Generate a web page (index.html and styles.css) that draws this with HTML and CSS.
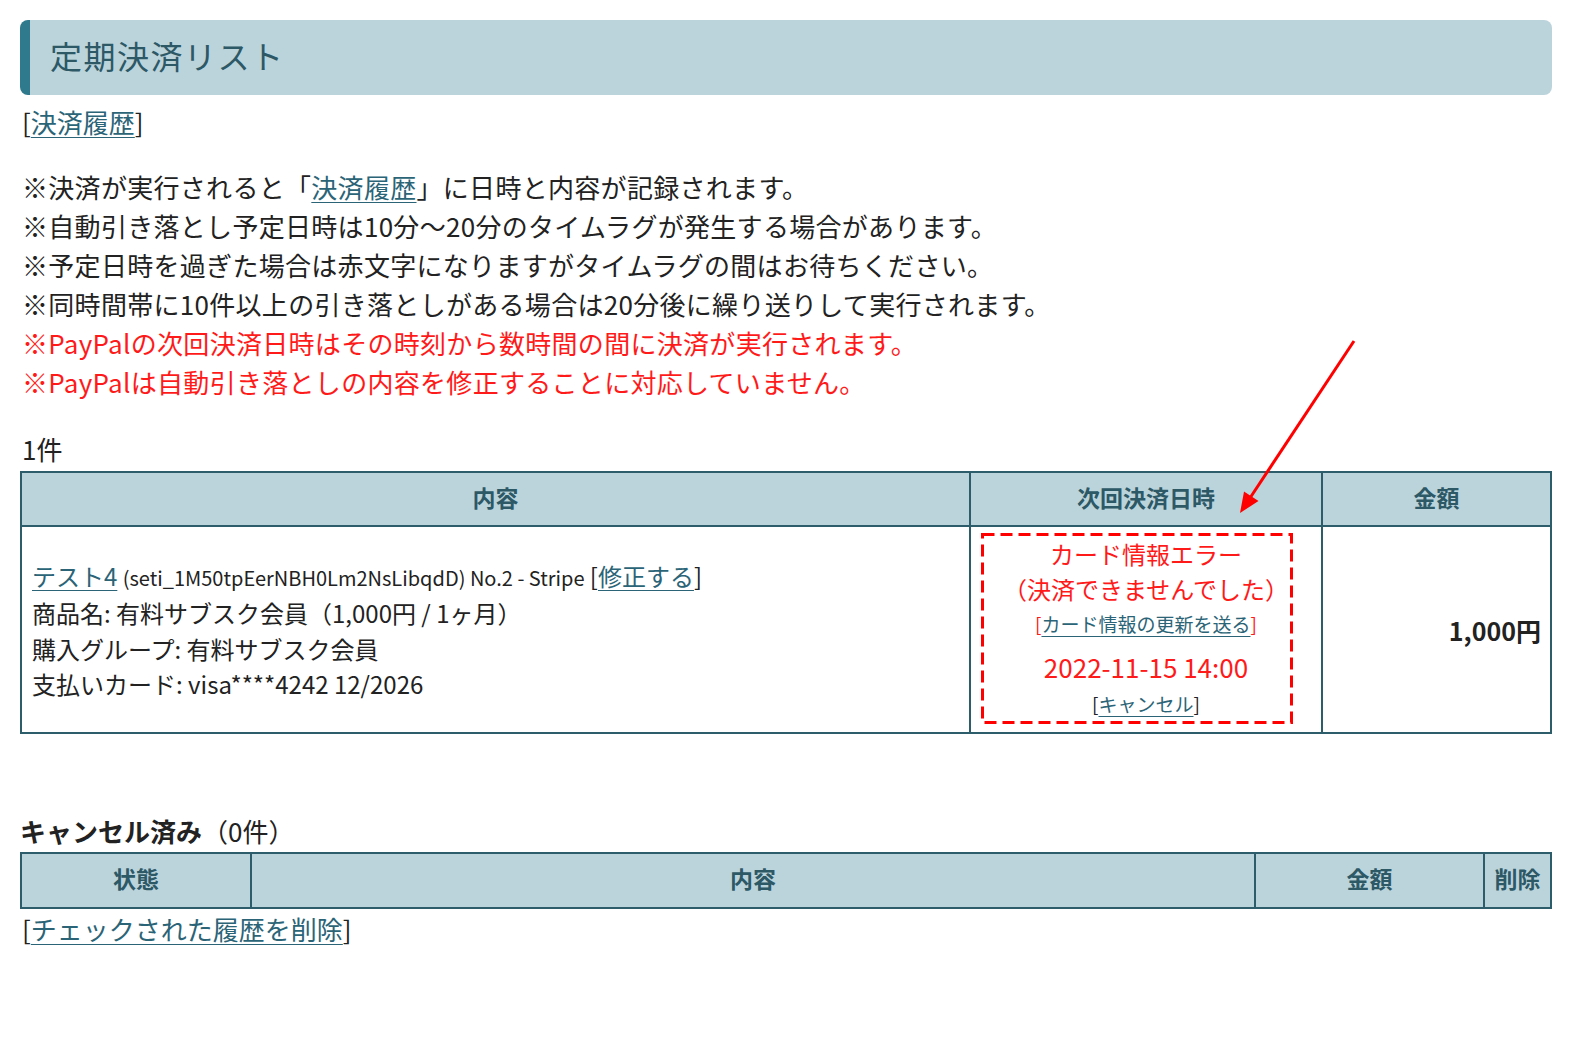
FILE: index.html
```html
<!DOCTYPE html>
<html lang="ja">
<head>
    <meta charset="UTF-8">
    <title>定期決済リスト</title>
    <link rel="stylesheet" href="styles.css">
</head>
<body>
    <div class="page">
        <h1 class="title">定期決済リスト</h1>
        <p class="history">[<a href="#">決済履歴</a>]</p>

        <ul class="notes">
            <li>※決済が実行されると「<a href="#">決済履歴</a>」に日時と内容が記録されます。</li>
            <li>※自動引き落とし予定日時は10分～20分のタイムラグが発生する場合があります。</li>
            <li>※予定日時を過ぎた場合は赤文字になりますがタイムラグの間はお待ちください。</li>
            <li>※同時間帯に10件以上の引き落としがある場合は20分後に繰り送りして実行されます。</li>
            <li class="red">※PayPalの次回決済日時はその時刻から数時間の間に決済が実行されます。</li>
            <li class="red">※PayPalは自動引き落としの内容を修正することに対応していません。</li>
        </ul>

        <div class="count">1件</div>
        <table class="list">
            <tr>
                <th class="c-content">内容</th>
                <th class="c-date">次回決済日時</th>
                <th class="c-price">金額</th>
            </tr>
            <tr>
                <td class="info">
                    <div><a href="#">テスト4</a> <span class="sub">(seti_1M50tpEerNBH0Lm2NsLibqdD) No.2 - Stripe</span> [<a href="#">修正する</a>]</div>
                    <div>商品名: 有料サブスク会員（1,000円 / 1ヶ月）</div>
                    <div>購入グループ: 有料サブスク会員</div>
                    <div>支払いカード: visa****4242 12/2026</div>
                </td>
                <td class="date">
                    <div class="err">カード情報エラー<br>（決済できませんでした）</div>
                    <div class="small"><span class="red">[</span><a href="#">カード情報の更新を送る</a><span class="red">]</span></div>
                    <div class="next">2022-11-15 14:00</div>
                    <div class="small cancel">[<a href="#">キャンセル</a>]</div>
                </td>
                <td class="price">1,000円</td>
            </tr>
        </table>

        <h2 class="cancel-title">キャンセル済み<span>（0件）</span></h2>
        <table class="list done">
            <tr>
                <th class="d-state">状態</th>
                <th>内容</th>
                <th class="d-price">金額</th>
                <th class="d-del">削除</th>
            </tr>
        </table>
        <p class="delete">[<a href="#">チェックされた履歴を削除</a>]</p>

        <!-- 注釈 (赤枠と矢印) -->
        <svg class="mark-box" width="312" height="191" viewBox="0 0 312 191">
            <rect x="1.5" y="1.5" width="309" height="188" fill="none" stroke="#ff0000" stroke-width="3" stroke-dasharray="12 6"/>
        </svg>
        <svg class="mark-arrow" width="135" height="190" viewBox="0 0 135 190">
            <line x1="124" y1="11" x2="20" y2="168" stroke="#ff0000" stroke-width="3"/>
            <polygon points="10,183 28.5,171 14,161.5" fill="#ff0000"/>
        </svg>
    </div>
</body>
</html>
```

FILE: styles.css
```css
body{
    margin: 0;
    background: #fff;
    color: #222;
    font-family: "Noto Sans CJK JP", "Noto Sans", sans-serif;
    font-size: 26px;
}
.page{
    position: relative;
    padding: 20px;
}
a{
    color: #2b6477;
    text-decoration: underline;
    text-underline-offset: 4px;
    text-decoration-thickness: 1px;
}
.title{
    margin: 0;
    height: 75px;
    line-height: 70px;
    padding-left: 20px;
    background-color: #bbd4dc;
    border-left: 10px solid #2f7a8c;
    border-radius: 8px;
    color: #2d5866;
    font-size: 32px;
    font-weight: normal;
    letter-spacing: 1.5px;
}
.history{
    margin: 7px 0 0 2px;
    line-height: 39px;
}
.notes{
    margin: 26px 0 0 2px;
    padding: 0;
    list-style: none;
    line-height: 39px;
    letter-spacing: 0.3px;
}
.red{
    color: #ff1a1a;
}
.count{
    margin-top: 28px;
    line-height: 39px;
    padding-left: 2px;
}
.list{
    width: 100%;
    margin-top: 3px;
    border-collapse: collapse;
}
.list th,.list td{
    border: 2px solid #2d5d6a;
}
.list th{
    height: 47px;
    padding: 0 0 5px;
    background-color: #bbd4dc;
    color: #2d5866;
    font-size: 23px;
    font-weight: bold;
    text-align: center;
}
.c-content{ width: 947px; }
.c-date{ width: 350px; }
.info{
    padding: 9px 10px;
    line-height: 35.5px;
    font-size: 24px;
    vertical-align: middle;
}
.info .sub{
    font-size: 20px;
}
.date{
    padding: 9px 0;
    text-align: center;
    vertical-align: middle;
}
.date .err{
    color: #ff1a1a;
    font-size: 24px;
    line-height: 35px;
}
.date .small{
    font-size: 19px;
    line-height: 36px;
}
.date .next{
    margin-top: 7px;
    color: #ff1a1a;
    font-size: 26px;
    line-height: 36px;
}
.date .cancel{
    line-height: 38px;
}
.price{
    padding: 0 9px;
    text-align: right;
    font-size: 25px;
    font-weight: bold;
    vertical-align: middle;
}
.cancel-title{
    margin: 77px 0 0 0;
    line-height: 39px;
    font-size: 26px;
    font-weight: bold;
}
.cancel-title span{
    font-weight: normal;
}
.done{
    margin-top: 2px;
}
.done th{
    height: 48px;
}
.d-state{ width: 228px; }
.d-price{ width: 227px; }
.d-del{ width: 65px; }
.delete{
    margin: 0 0 0 2px;
    line-height: 39px;
}
.mark-box{
    position: absolute;
    left: 981px;
    top: 533px;
}
.mark-arrow{
    position: absolute;
    left: 1230px;
    top: 330px;
}
```
